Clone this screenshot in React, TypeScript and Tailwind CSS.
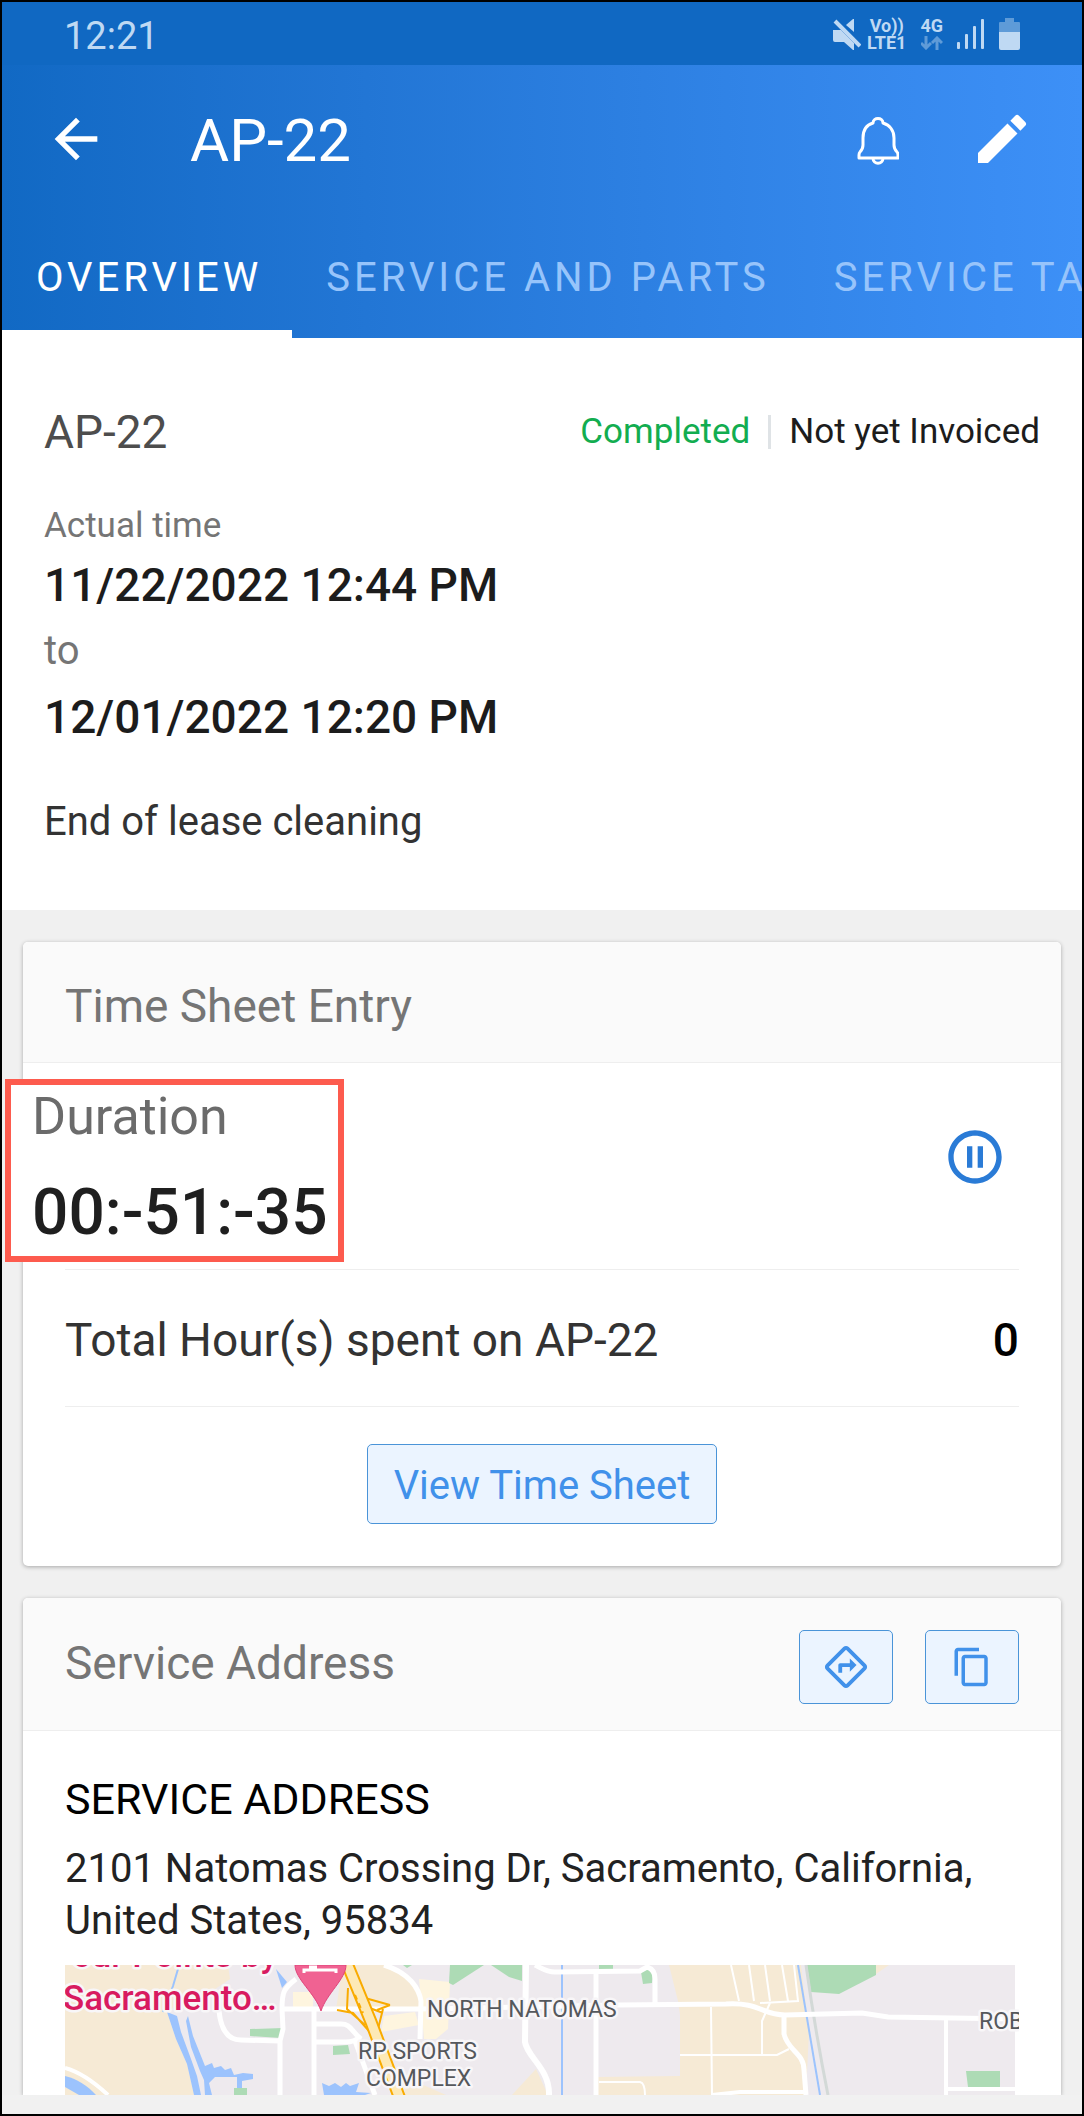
import type { ReactNode } from 'react';
import {
  MdArrowBack,
  MdContentCopy,
  MdEdit,
  MdOutlineDirections,
  MdPauseCircleOutline,
} from 'react-icons/md';

const tabs = ['OVERVIEW', 'SERVICE AND PARTS', 'SERVICE TASKS'];

function MuteIcon() {
  return (
    <svg width="28" height="32" viewBox="0 0 28 32" fill="currentColor" aria-hidden="true">
      <path d="M0 12h8l13 13v7h-1l-9-8H2q-2 0-2-2z" />
      <path d="M20 1h1v13l-8-7z" />
      <path d="M2 3l25 25" stroke="currentColor" strokeWidth="4" />
    </svg>
  );
}

function SignalIcon() {
  return (
    <svg width="28" height="32" viewBox="0 0 28 32" fill="currentColor" aria-hidden="true">
      <rect x="0" y="24" width="3" height="7" rx="1" />
      <rect x="8" y="16" width="3" height="15" rx="1" />
      <rect x="16" y="8" width="3" height="23" rx="1" />
      <rect x="24" y="1" width="3" height="30" rx="1" />
    </svg>
  );
}

function BatteryIcon() {
  return (
    <svg width="21" height="32" viewBox="0 0 21 32" fill="currentColor" aria-hidden="true">
      <path d="M6 0h9v4h5q1 0 1 1v9H0V5q0-1 1-1h5z" opacity="0.45" />
      <path d="M0 14h21v16q0 2-2 2H2q-2 0-2-2z" />
    </svg>
  );
}

function DataArrows() {
  return (
    <svg width="22" height="14" viewBox="0 0 22 14" fill="none" stroke="currentColor" strokeWidth="3" opacity="0.45" aria-hidden="true">
      <path d="M5 0v12M0 7l5 5 5-5M16 14V2M11 7l5-5 5 5" />
    </svg>
  );
}

function BellIcon() {
  return (
    <svg width="42" height="48" viewBox="0 0 42 48" fill="none" stroke="currentColor" strokeWidth="3" strokeLinejoin="round" aria-hidden="true">
      <path d="M16 6c0-6 10-6 10 0 7 2 11 8 11 15v7c0 3 1 5 3 7 1 1 1 2 1 3v3H2v-3c0-1 0-2 1-3 2-2 3-4 3-7v-7C6 14 9 8 16 6z" />
      <path d="M16 41c0 7 10 7 10 0" />
    </svg>
  );
}

function StatusBar() {
  return (
    <div className="flex h-[63px] items-center justify-between bg-[#1068c2] px-[62px] text-[#bfd9f3]">
      <span className="pt-1 text-[38px] leading-[48px]">12:21</span>
      <div className="flex items-center gap-[14px]">
        <div className="flex items-center gap-[6px]">
          <MuteIcon />
          <div className="flex flex-col items-center text-[18px] leading-[17px] font-bold">
            <span>Vo))</span>
            <span>LTE1</span>
          </div>
        </div>
        <div className="flex flex-col items-center gap-[2px] text-[18px] leading-[17px] font-bold">
          <span>4G</span>
          <DataArrows />
        </div>
        <SignalIcon />
        <BatteryIcon />
      </div>
    </div>
  );
}

function Header() {
  return (
    <header className="bg-linear-to-r from-[#1169c4] to-[#3d90f7] text-white">
      <div className="flex h-[147px] items-center pr-12 pl-[42px]">
        <button type="button" aria-label="Back">
          <MdArrowBack size={64} />
        </button>
        <h1 className="ml-[82px] flex-1 pt-1 text-[60px] leading-[64px]">AP-22</h1>
        <button type="button" aria-label="Notifications" className="mr-[71px] pt-1">
          <BellIcon />
        </button>
        <button type="button" aria-label="Edit">
          <MdEdit size={64} />
        </button>
      </div>
      <nav className="flex overflow-hidden">
        {tabs.map((tab, i) => (
          <a
            key={tab}
            href="#"
            className={`relative h-[126px] shrink-0 pt-[42px] pr-[30px] pl-[34px] text-[40px] leading-[48px] tracking-widest whitespace-nowrap ${
              i === 0 ? 'text-white' : 'text-[#97c4fb]'
            }`}
          >
            {tab}
            {i === 0 && <span className="absolute inset-x-0 bottom-0 h-2 bg-white" />}
          </a>
        ))}
      </nav>
    </header>
  );
}

function Summary() {
  return (
    <section className="bg-white px-[42px] pt-[66px] pb-16">
      <div className="flex items-center justify-between">
        <h2 className="text-[46px] leading-[56px] text-[#4d4d4d]">AP-22</h2>
        <div className="flex items-center text-[35px] leading-[48px]">
          <span className="text-[#12ad50]">Completed</span>
          <span className="mx-[18px] h-[34px] w-[3px] bg-[#dfe3e6]" />
          <span className="text-[#1c1c1c]">Not yet Invoiced</span>
        </div>
      </div>
      <div className="mt-[42px] flex flex-col gap-1 text-[#757575]">
        <span className="text-[35px] leading-[48px]">Actual time</span>
        <span className="text-[46px] leading-[62px] font-medium text-[#1c1c1c]">11/22/2022 12:44 PM</span>
        <span className="text-[40px] leading-[62px]">to</span>
        <span className="text-[46px] leading-[62px] font-medium text-[#1c1c1c]">12/01/2022 12:20 PM</span>
      </div>
      <p className="mt-[50px] text-[40px] leading-[48px] text-[#333]">End of lease cleaning</p>
    </section>
  );
}

function OutlineButton({ label, className, children }: { label?: string; className: string; children: ReactNode }) {
  return (
    <button
      type="button"
      aria-label={label}
      className={`flex items-center justify-center rounded-[5px] border border-[#4a94d8] bg-[#ebf4ff] text-[#4191ea] ${className}`}
    >
      {children}
    </button>
  );
}

function TimeSheetCard() {
  return (
    <section className="mx-[21px] mt-8 rounded-[5px] bg-white shadow-[0_1px_4px_rgba(0,0,0,0.3)]">
      <div className="rounded-t-[5px] border-b border-[#eee] bg-[#fafafa] px-[42px] pt-9 pb-7">
        <h2 className="text-[46px] leading-[56px] text-[#757575]">Time Sheet Entry</h2>
      </div>
      <div className="px-[42px]">
        <div className="flex items-start justify-between border-b border-[#eee] pt-4 pb-[7px]">
          {/* Highlighted duration, hangs over the card edge */}
          <div className="-ml-[60px] flex w-[339px] flex-col gap-6 border-6 border-[#fd5b4e] bg-white pb-[3px] pl-[21px]">
            <span className="text-[52px] leading-[64px] text-[#6b6b6b]">Duration</span>
            <span className="text-[64px] leading-[80px] font-medium text-[#1f1f1f]">00:-51:-35</span>
          </div>
          <button type="button" aria-label="Pause" className="mt-[46px] mr-3 text-[#2a7bd6]">
            <MdPauseCircleOutline size={64} />
          </button>
        </div>
        <div className="flex h-[137px] items-center justify-between border-b border-[#eee] pt-1 text-[46px] leading-[56px]">
          <span className="text-[#333]">Total Hour(s) spent on AP-22</span>
          <span className="font-medium text-black">0</span>
        </div>
        <div className="flex justify-center pt-[37px] pb-[42px]">
          <OutlineButton className="h-20 px-[26px] pt-1 text-[40px] leading-[48px]">View Time Sheet</OutlineButton>
        </div>
      </div>
    </section>
  );
}

function AreaMap() {
  return (
    <svg
      className="mt-[18px] block h-[130px] w-full"
      viewBox="0 0 954 130"
      preserveAspectRatio="xMinYMin slice"
      role="img"
      aria-label="Map of North Natomas"
    >
      <rect width="954" height="130" fill="#eeeaee" />
      {/* Farmland */}
      <g fill="#f6ead5">
        <path d="M0 0H163L165 14L150 24L112 40L102 47L111 74L122 99L129 130H0Z" />
        <path d="M278 0H319L345 12L354 27V44H271Z" />
        <path d="M471 104L483 130H447Z" />
        <path d="M340 112L381 130H340Z" />
        <path d="M604 0H736L744 66L741 130H533V112L615 111V50L613 36Z" />
        <path d="M811 0H824L811 9Z" />
      </g>
      <g fill="#fef5df">
        <path d="M228 27H248V44H228Z" />
        <path d="M354 14L385 17L383 64L371 74H359Z" />
        <path d="M319 51L350 47L354 60L316 67Z" />
      </g>
      {/* Parks */}
      <g fill="#addbb5">
        <path d="M185 64L218 63L216 73L185 71Z" />
        <path d="M268 81L283 80L285 89L268 90Z" />
        <path d="M169 123H182V130H169Z" />
        <path d="M338 0H347L342 3Z" />
        <path d="M385 0H419L388 20L384 18Z" />
        <path d="M426 0H457V16L444 12Z" />
        <path d="M534 0H548V4L534 5Z" />
        <path d="M576 7L583 4L588 10L587 18L578 19Z" />
        <path d="M742 0H811V10L774 29L746 27Z" />
        <path d="M901 106H935V122H903Z" />
      </g>
      {/* Water */}
      <g fill="#9cc3fd">
        <path d="M102 47L112 51L116 67L126 94L132 111L136 130H129L122 99L111 74Z" />
        <path d="M123 51L128 71L140 101L147 98L149 103L156 101L160 105L166 103L169 110L178 108L188 109V114L177 116V123H172V112H150L144 118L147 130H140L139 115L135 106L126 82L121 56Z" />
        <path d="M211 4L222 17L217 23Z" />
        <path d="M257 118L264 121L270 118L276 122L281 118L285 121L294 118L291 127L306 128L300 130H259Z" />
        <path d="M0 111C12 114 22 120 31 130H14L0 122Z" />
      </g>
      <g fill="none" stroke="#9cc3fd">
        <path d="M113 4L108 21L98 47" strokeWidth="2" />
        <path d="M497 0V130" strokeWidth="2" />
        <path d="M741 0C748 50 756 95 763 130" stroke="#d3d9d7" strokeWidth="3" />
        <path d="M733 0L755 130" strokeWidth="2" />
      </g>
      {/* Roads */}
      <g fill="none" stroke="#fff">
        <g strokeWidth="5">
          <path d="M218 44H354L553 40L661 39C695 37 697 50 720 50L797 48L823 52L954 54" />
          <path d="M0 103C15 107 30 118 43 130" strokeWidth="4" />
          <path d="M231 14C218 24 217 28 217 44L218 64L215 76V130" />
          <path d="M249 44V130" />
          <path d="M154 46C156 66 164 75 176 75L215 76" />
          <path d="M250 59H276C286 59 286 66 296 74M250 77H280Q290 77 295 72M290 76L310 130" />
          <path d="M319 0C345 8 354 24 356 36L355 74" />
          <path d="M461 0L460 77C462 92 485 104 484 130" strokeWidth="6" />
          <path d="M470 0C478 4 482 7 490 7L575 6L582 2Q590 4 590 14V38" />
          <path d="M531 8V130" />
          <path d="M719 50V69C723 86 739 88 739 105L741 130" />
          <path d="M647 130L675 127H741M881 53V130M883 124H954M952 0V130" strokeWidth="4" />
        </g>
        <g strokeWidth="2">
          <path d="M666 0L674 36M684 0L689 36M700 0L705 36M717 0L723 36M729 0L733 36L695 38" />
          <path d="M705 38L697 56V90M646 42L647 130M615 90H712L724 84" />
          <path d="M534 117H575Q580 118 580 130" />
        </g>
      </g>
      {/* Freeway */}
      <g fill="none" stroke="#f9ab00">
        <path d="M283 23L282 44L300 60M272 45L288 48L304 66M300 33L325 40M312 45L325 40M318 44L313 64M302 42L318 48" strokeWidth="2" />
        <path d="M281 -4L306 57L335 134" strokeWidth="13" />
        <path d="M281 -4L306 57L335 134" stroke="#fde9b6" strokeWidth="9" />
        <path d="M290 30L298 48" strokeWidth="2" strokeDasharray="5 4" />
      </g>
      {/* Hotel pin */}
      <path d="M230 0H281C281 14 262 28 256 46C250 28 230 14 230 0Z" fill="#f06292" stroke="#e0447a" />
      <path d="M239 8V5H271V8M244 2H252" fill="none" stroke="#fff" strokeWidth="3" />
      {/* Place labels */}
      <g fontFamily="Roboto, sans-serif" fill="#55585c" stroke="#f8f6f8" strokeWidth="5" strokeLinejoin="round" paintOrder="stroke" fontSize="23">
        <g fill="#d81b60" fontSize="35" fontWeight="500">
          <text x="-12" y="2">Four Points by</text>
          <text x="-2" y="45">Sacramento…</text>
        </g>
        <text x="362" y="52">NORTH NATOMAS</text>
        <text x="293" y="94">RP SPORTS</text>
        <text x="301" y="121">COMPLEX</text>
        <text x="914" y="64">ROBLA</text>
      </g>
    </svg>
  );
}

function AddressCard() {
  return (
    <section className="mx-[21px] mt-8 rounded-t-[5px] bg-white shadow-[0_1px_4px_rgba(0,0,0,0.3)]">
      <div className="flex items-start justify-between rounded-t-[5px] border-b border-[#eee] bg-[#fafafa] px-[42px] pt-8 pb-[26px]">
        <h2 className="text-[46px] leading-[66px] text-[#757575]">Service Address</h2>
        <div className="flex gap-8">
          <OutlineButton label="Directions" className="h-[74px] w-[94px]">
            <MdOutlineDirections size={46} />
          </OutlineButton>
          <OutlineButton label="Copy address" className="h-[74px] w-[94px]">
            <MdContentCopy size={42} />
          </OutlineButton>
        </div>
      </div>
      <div className="px-[42px] pt-10">
        <h3 className="text-[43px] leading-[56px] text-black">SERVICE ADDRESS</h3>
        <p className="mt-4 text-[40px] leading-[52px] text-[#222]">
          2101 Natomas Crossing Dr, Sacramento, California, United States, 95834
        </p>
        <AreaMap />
      </div>
    </section>
  );
}

export default function App() {
  return (
    <div className="min-h-screen overflow-hidden border-2 border-black bg-[#f0f0f0] font-[Roboto,sans-serif]">
      <StatusBar />
      <Header />
      <main>
        <Summary />
        <TimeSheetCard />
        <AddressCard />
      </main>
      <footer className="relative h-[18px] bg-[#f1f1f1]" />
    </div>
  );
}
